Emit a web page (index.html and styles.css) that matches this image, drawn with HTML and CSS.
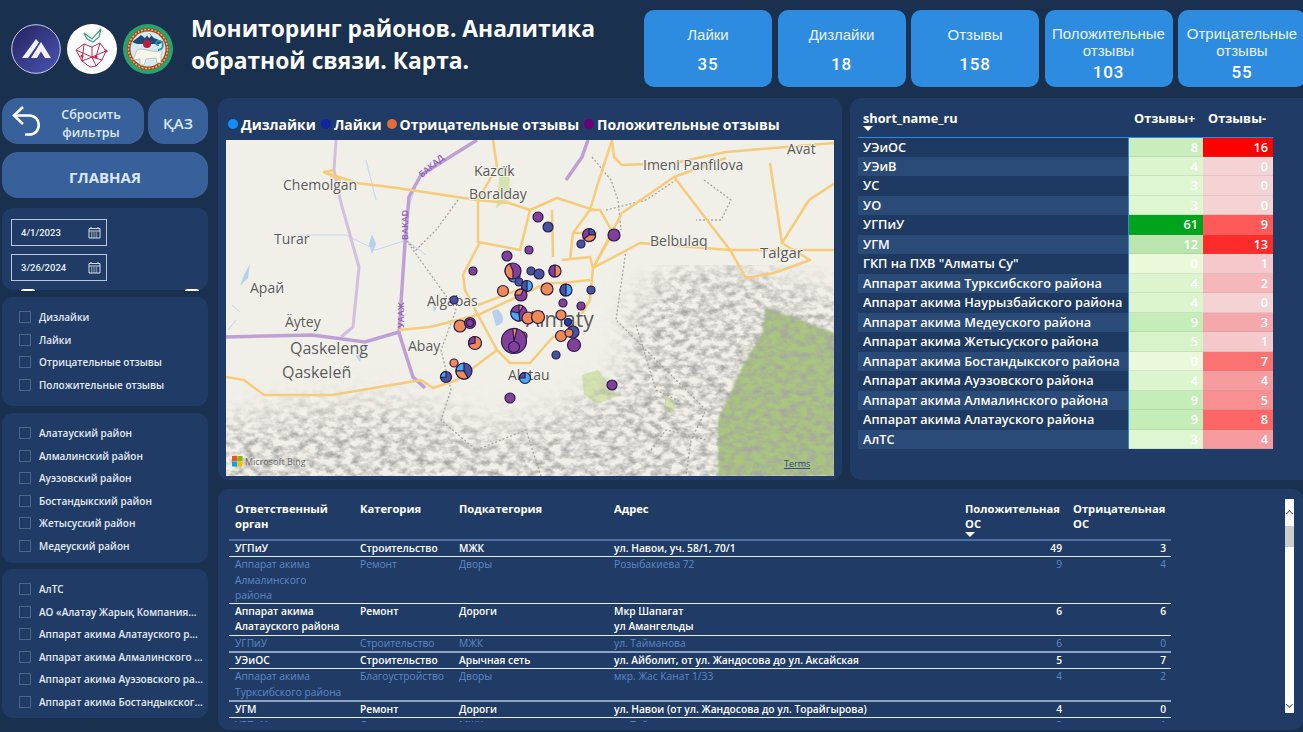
FILE: index.html
```html
<!DOCTYPE html>
<html lang="ru">
<head>
    <meta charset="UTF-8">
    <meta name="viewport" content="width=device-width, initial-scale=1.0">
    <title>Мониторинг районов</title>
    <link rel="stylesheet" href="styles.css">
</head>
<body>
    <header class="top">
        <div class="logos">
            <svg class="logo" viewBox="0 0 50 50">
                <defs>
                    <linearGradient id="logoBlue" x1="0" y1="0" x2="1" y2="1">
                        <stop offset="0" stop-color="#26215f"/>
                        <stop offset="1" stop-color="#4a56b4"/>
                    </linearGradient>
                </defs>
                <circle cx="25" cy="25" r="24.3" fill="url(#logoBlue)" stroke="#c9cdea" stroke-width="1"/>
                <path d="M11 34 L25 15 L28 18.5 L17 34Z M20 34 L30 18 L40 34 H34 L30 27.5 L26 34Z" fill="#f2f2fb"/>
            </svg>
            <svg class="logo" viewBox="0 0 50 50">
                <circle cx="25" cy="25" r="25" fill="#fff"/>
                <path d="M17 9 L25 15 L34 5 L32 13 L26 18 L20 15Z" fill="none" stroke="#3a9d82" stroke-width="1.2"/>
                <path d="M9 26 L17 20 L25 23 L33 19 L39 27 L35 36 L29 42 L23 43 L15 37Z M17 20 L15 37 L25 33 L29 42 M25 23 L25 33 L35 36 M33 19 L29 33 M9 26 L25 33 L39 27" fill="none" stroke="#c8254b" stroke-width="1"/>
                <circle cx="39" cy="27" r="1.6" fill="#c8254b"/>
                <circle cx="29" cy="33" r="1.6" fill="#c8254b"/>
                <circle cx="15" cy="32" r="1.6" fill="#c8254b"/>
            </svg>
            <svg class="logo" viewBox="0 0 50 50">
                <circle cx="25" cy="25" r="25" fill="#27a36e"/>
                <circle cx="25" cy="25" r="21" fill="#a8472c"/>
                <circle cx="25" cy="25" r="19.500" fill="none" stroke="#e6c15a" stroke-width="1.500" stroke-dasharray="2 1.500"/>
                <circle cx="25" cy="25" r="17.500" fill="#d6e9ee"/>
                <path d="M9 18 L18 11 L22 14 L26 9 L31 14 L41 18 L36 20 H14Z" fill="#1f4a78"/>
                <path d="M24 11 L26 9 L28 12 L26 14Z" fill="#fff"/>
                <circle cx="24" cy="20" r="4" fill="#b5213a"/>
                <path d="M10 36 L14 26 C20 23 30 29 35 27 C38 25 40 27 38 31 L38 39 L34 39 L33 34 L23 35 L21 41 L17 41 L17 35Z" fill="#f7f5ea" stroke="#8a9a9a" stroke-width=".5"/>
                <path d="M35 26 C42 25 41 16 35 17 C32 18 33 22 36 21" fill="none" stroke="#2b95a8" stroke-width="1.800"/>
            </svg>
        </div>
        <h1 class="title">Мониторинг районов. Аналитика обратной связи. Карта.</h1>
        <div class="kpis">
            <div class="kpi"><span class="kpi-name">Лайки</span><span class="kpi-num">35</span></div>
            <div class="kpi"><span class="kpi-name">Дизлайки</span><span class="kpi-num">18</span></div>
            <div class="kpi"><span class="kpi-name">Отзывы</span><span class="kpi-num">158</span></div>
            <div class="kpi kpi-long"><span class="kpi-name">Положительные отзывы</span><span class="kpi-num">103</span></div>
            <div class="kpi kpi-long"><span class="kpi-name">Отрицательные отзывы</span><span class="kpi-num">55</span></div>
        </div>
    </header>

    <div class="main">
        <aside class="side">
            <div class="btn-row">
                <button class="btn btn-reset">
                    <svg class="reset-icon" viewBox="0 0 28 32">
                        <path d="M11 2 L2 10.500 L11 19 M2 10.500 H17 C30 10.500 30 29.500 17 29.500 H13" fill="none" stroke="#fff" stroke-width="2.600"/>
                    </svg>
                    <span class="reset-text">Сбросить фильтры</span>
                </button>
                <button class="btn btn-lang">ҚАЗ</button>
            </div>
            <button class="btn btn-main">ГЛАВНАЯ</button>

            <div class="panel dates">
                <div class="date-box"><span>4/1/2023</span>
                    <svg class="cal" viewBox="0 0 13 13"><path d="M1 2.500h11v9.500h-11z M1 5h11" fill="none" stroke="#d5dcea"/><path d="M3 1v2M10 1v2M3 7h7M3 9h7M3 11h7" stroke="#d5dcea" stroke-dasharray="1 .7"/></svg>
                </div>
                <div class="date-box"><span>3/26/2024</span>
                    <svg class="cal" viewBox="0 0 13 13"><path d="M1 2.500h11v9.500h-11z M1 5h11" fill="none" stroke="#d5dcea"/><path d="M3 1v2M10 1v2M3 7h7M3 9h7M3 11h7" stroke="#d5dcea" stroke-dasharray="1 .7"/></svg>
                </div>
                <span class="handle handle-left"></span>
                <span class="handle handle-right"></span>
            </div>

            <ul class="panel checks checks-type">
                <li><i></i><span>Дизлайки</span></li>
                <li><i></i><span>Лайки</span></li>
                <li><i></i><span>Отрицательные отзывы</span></li>
                <li><i></i><span>Положительные отзывы</span></li>
            </ul>
            <ul class="panel checks checks-list">
                <li><i></i><span>Алатауский район</span></li>
                <li><i></i><span>Алмалинский район</span></li>
                <li><i></i><span>Ауэзовский район</span></li>
                <li><i></i><span>Бостандыкский район</span></li>
                <li><i></i><span>Жетысуский район</span></li>
                <li><i></i><span>Медеуский район</span></li>
            </ul>
            <ul class="panel checks checks-list">
                <li><i></i><span>АлТС</span></li>
                <li><i></i><span>АО «Алатау Жарық Компания...</span></li>
                <li><i></i><span>Аппарат акима Алатауского р...</span></li>
                <li><i></i><span>Аппарат акима Алмалинского ...</span></li>
                <li><i></i><span>Аппарат акима Ауэзовского ра...</span></li>
                <li><i></i><span>Аппарат акима Бостандыкског...</span></li>
            </ul>
        </aside>

        <div class="content">
            <section class="panel map-panel">
                <div class="legend">
                    <span class="dot dot-sky"></span><span>Дизлайки</span>
                    <span class="dot dot-navy"></span><span>Лайки</span>
                    <span class="dot dot-orange"></span><span>Отрицательные отзывы</span>
                    <span class="dot dot-purple"></span><span>Положительные отзывы</span>
                </div>
                <svg class="map" viewBox="0 0 608 336">
                    <defs>
                        <filter id="relief" x="0" y="0" width="1" height="1">
                            <feTurbulence type="fractalNoise" baseFrequency=".11 .16" numOctaves="4" seed="7" result="noise"/>
                            <feColorMatrix in="noise" values="0 0 0 0 .38  0 0 0 0 .38  0 0 0 0 .36  2.200 0 0 0 -.8" result="grain"/>
                            <feGaussianBlur in="SourceAlpha" stdDeviation="16" result="edge"/>
                            <feComposite in="grain" in2="edge" operator="in"/>
                        </filter>
                        <filter id="soft"><feGaussianBlur stdDeviation="1"/></filter>
                    </defs>
                    <rect width="608" height="336" fill="#f0efe8"/>
                    <path d="M492 336V280L516 227L536 193L540 167L609 193V336Z" fill="#a9c57f" filter="url(#soft)"/>
                    <path class="green" d="M274 30L284 30L283 60L270 68Z"/>
                    <path class="green" d="M356 235L372 230L392 256L372 264L358 254Z"/>
                    <path class="green" d="M440 255L450 262L446 275L438 268Z"/>
                    <path d="M-40 290L60 270L160 262L215 275L270 290L340 270L400 235L405 170L440 130L520 125L650 170V380H-40Z" filter="url(#relief)"/>
                    <path class="lake" d="M266 172Q272 166 276 175T270 186Z M146 94L150 104L146 114L143 104Z M18 135L24 124L22 138L14 146Z M132 208L137 212L134 222L130 216Z M206 160L212 166L208 172Z"/>
                    <path class="water" d="M70 95H120L150 110L180 100L200 115M190 45L182 70M140 20L150 60M6 165L14 172M10 180L2 190"/>

                    <path class="border" d="M232 60L210 90L190 110L180 100L230 170L215 210L225 250L215 280L250 310L300 290L315 336M366 17L385 40L392 60L395 90M380 70L420 60L450 40M478 40L505 60L495 80L470 80M400 110L390 180L440 230L480 270L465 300L460 336M410 185L430 250L455 262M425 310L440 290L480 300"/>

                    <path class="lilac" d="M110 0L108 30L115 63L133 127L127 187L115 197"/>
                    <path class="purple" d="M251 0L195 35L183 57L179 103L173 193L187 237L199 248"/>
                    <path class="purple" d="M0 197L86 195L139 202L173 192"/>
                    <path class="purple" d="M362 0L356 17L340 40"/>

                    <g class="road">
                        <path d="M98 32L131 43L171 48L251 60L283 63L304 70L331 58L368 70"/>
                        <path d="M108 30L98 32L115 40"/>
                        <path d="M267 0L271 27L252 60V102L294 110L304 70M326 70L327 117"/>
                        <path d="M254 102L237 135L239 150L252 175L271 210L284 223H304L327 197L344 193L364 160L367 128L414 103L504 110H609"/>
                        <path d="M204 187L252 175L321 143H337L364 140"/>
                        <path d="M386 0L372 43L364 70L347 93L344 120M347 93H371M364 70H374L387 93L367 128M336 120L364 117L367 128"/>
                        <path d="M386 0L388 17L396 25L448 23L500 12L609 3"/>
                        <path d="M448 37L504 110M448 37L396 73L367 128M448 37L500 18M609 43L583 60L556 103L544 23"/>
                        <path d="M504 110L520 138L548 133L584 120L556 103"/>
                        <path d="M0 237L18 240L38 255L106 255L195 240L207 248L231 240L271 210"/>
                        <path d="M173 190L204 187"/>
                        <path d="M252 165L300 147"/>
                    </g>

                    <text class="label" x="57" y="50">Chemolgan</text>
                    <text class="label" x="248" y="36">Kazcïk</text>
                    <text class="label" x="243" y="59">Boralday</text>
                    <text class="label" x="417" y="30">Imeni Panfilova</text>
                    <text class="label" x="561" y="14">Avat</text>
                    <text class="label" x="48" y="104">Turar</text>
                    <text class="label" x="424" y="106">Belbulaq</text>
                    <text class="label label-md" x="534" y="118">Talgar</text>
                    <text class="label" x="24" y="153">Арай</text>
                    <text class="label" x="201" y="166">Algabas</text>
                    <text class="label" x="59" y="187">Äytey</text>
                    <text class="label" x="182" y="211">Abay</text>
                    <text class="label label-lg" x="64" y="214">Qaskeleng</text>
                    <text class="label label-lg" x="56" y="238">Qaskeleñ</text>
                    <text class="label label-xl" x="300" y="187">Almaty</text>
                    <text class="label" x="282" y="240">Alatau</text>
                    <text class="road-label" transform="translate(196 38) rotate(-40)">БАКАД</text>
                    <text class="road-label" transform="translate(182 100) rotate(-90)">BAKAD</text>
                    <text class="road-label" transform="translate(178 188) rotate(-90)">УААЖ</text>

                    <circle class="b-purple" cx="312" cy="77" r="5"/>
                    <circle class="b-navy" cx="322" cy="87" r="5"/>
                    <g class="pie" transform="translate(363 95) scale(6.500)">
                        <circle class="b-purple" r="1"/><path class="b-navy" d="M0 0V-1A1 1 0 0 1 1 0Z"/><path class="b-orange" d="M0 0L1 0A1 1 0 0 1 -.8 .6Z"/>
                    </g>
                    <circle class="b-purple" cx="388" cy="95" r="6"/>
                    <circle class="b-navy" cx="355" cy="104" r="4"/>
                    <circle class="b-purple" cx="303" cy="110" r="4"/>
                    <circle class="b-purple" cx="281" cy="116" r="5"/>
                    <circle class="b-purple" cx="247" cy="131" r="4"/>
                    <circle class="b-sky" cx="288" cy="136" r="6"/>
                    <g class="pie" transform="translate(287 131) scale(8)">
                        <circle class="b-purple" r="1"/><path class="b-orange" d="M0 0V1A1 1 0 0 1 -1 0A1 1 0 0 1 -.4 -.9Z"/>
                    </g>
                    <circle class="b-navy" cx="305" cy="131" r="4"/>
                    <circle class="b-navy" cx="313" cy="134" r="5"/>
                    <g class="pie" transform="translate(329 131) scale(6)">
                        <circle class="b-orange" r="1"/><path class="b-purple" d="M0 -1A1 1 0 0 0 0 1Z"/>
                    </g>
                    <circle class="b-navy" cx="293" cy="142" r="4"/>
                    <g class="pie" transform="translate(301 146) scale(5.500)">
                        <circle class="b-sky" r="1"/><path class="b-navy" d="M0 0V-1A1 1 0 0 0 -1 0A1 1 0 0 0 0 1Z"/>
                    </g>
                    <circle class="b-orange" cx="277" cy="151" r="5.500"/>
                    <circle class="b-orange" cx="321" cy="149" r="6"/>
                    <g class="pie" transform="translate(340 150) scale(6)">
                        <circle class="b-sky" r="1"/><path class="b-navy" d="M0 -1A1 1 0 0 0 0 1Z"/>
                    </g>
                    <circle class="b-navy" cx="365" cy="150" r="4"/>
                    <g class="pie" transform="translate(295 155) scale(6)">
                        <circle class="b-purple" r="1"/><path class="b-orange" d="M0 0L-1 0A1 1 0 0 1 .4 -.9Z"/>
                    </g>
                    <circle class="b-navy" cx="228" cy="160" r="4"/>
                    <circle class="b-purple" cx="337" cy="163" r="4"/>
                    <circle class="b-purple" cx="355" cy="166" r="4"/>
                    <g class="pie" transform="translate(293 173) scale(8)">
                        <circle class="b-purple" r="1"/><path class="b-sky" d="M0 0L.1 1A1 1 0 0 1 -1 -.2Z"/><path class="b-orange" d="M0 0V-1A1 1 0 0 1 .5 -.85Z"/>
                    </g>
                    <circle class="b-orange" cx="302" cy="178" r="6"/>
                    <circle class="b-orange" cx="312" cy="177" r="6.500"/>
                    <circle class="b-orange" cx="335" cy="175" r="5"/>
                    <circle class="b-navy" cx="347" cy="192" r="6"/>
                    <circle class="b-blue" cx="342" cy="182" r="3.500"/>
                    <circle class="b-orange" cx="335" cy="196" r="5.500"/>
                    <circle class="b-orange" cx="343" cy="193" r="4"/>
                    <circle class="b-purple" cx="348" cy="205" r="6.500"/>
                    <circle class="b-orange" cx="234" cy="186" r="6"/>
                    <circle class="b-purple" cx="244" cy="183" r="5.500"/>
                    <circle class="b-purple" cx="244" cy="183" r="3.500"/>
                    <g class="pie" transform="translate(249 203) scale(6.500)">
                        <circle class="b-orange" r="1"/><path class="b-purple" d="M0 0V-1A1 1 0 0 0 -1 .2Z"/>
                    </g>
                    <circle class="b-orange" cx="297" cy="196" r="4"/>
                    <g class="pie" transform="translate(288 201) scale(12.500)">
                        <circle class="b-purple" r="1"/><path class="b-orange" d="M0 0L-.1 -1A1 1 0 0 1 .25 -.97Z"/>
                    </g>
                    <circle class="b-purple" cx="288" cy="207" r="5.500"/>
                    <circle class="b-navy" cx="330" cy="215" r="4"/>
                    <circle class="b-orange" cx="228" cy="223" r="4"/>
                    <g class="pie" transform="translate(238 231) scale(8)">
                        <circle class="b-navy" r="1"/><path class="b-sky" d="M0 0V-1A1 1 0 0 0 -1 0Z"/><path class="b-orange" d="M0 0L-1 0A1 1 0 0 0 .5 .87Z"/>
                    </g>
                    <g class="pie" transform="translate(220 237) scale(5.500)">
                        <circle class="b-navy" r="1"/><path class="b-sky" d="M0 0V-1A1 1 0 0 0 -1 .1Z"/>
                    </g>
                    <g class="pie" transform="translate(299 238) scale(5.500)">
                        <circle class="b-sky" r="1"/><path class="b-navy" d="M0 0V-1A1 1 0 0 0 -1 0Z"/>
                    </g>
                    <circle class="b-purple" cx="386" cy="245" r="5"/>
                    <circle class="b-purple" cx="284" cy="258" r="5"/>

                    <rect x="6" y="316" width="5" height="5" fill="#f25022"/>
                    <rect x="11.500" y="316" width="5" height="5" fill="#7fba00"/>
                    <rect x="6" y="321.500" width="5" height="5" fill="#00a4ef"/>
                    <rect x="11.500" y="321.500" width="5" height="5" fill="#ffb900"/>
                    <text class="bing" x="19" y="325">Microsoft Bing</text>
                    <text class="terms" x="558" y="327">Terms</text>
                </svg>
            </section>

            <section class="panel rank-panel">
                <table class="rank">
                    <thead>
                        <tr><th class="rank-name">short_name_ru<b class="sort"></b></th><th class="rank-num">Отзывы+</th><th class="rank-num">Отзывы-</th></tr>
                    </thead>
                    <tbody>
                        <tr><td>УЭиОС</td><td class="p8">8</td><td class="n16">16</td></tr>
                        <tr><td>УЭиВ</td><td class="p4">4</td><td class="n0">0</td></tr>
                        <tr><td>УС</td><td class="p3">3</td><td class="n0">0</td></tr>
                        <tr><td>УО</td><td class="p3">3</td><td class="n0">0</td></tr>
                        <tr><td>УГПиУ</td><td class="p61">61</td><td class="n9">9</td></tr>
                        <tr><td>УГМ</td><td class="p12">12</td><td class="n13">13</td></tr>
                        <tr><td>ГКП на ПХВ "Алматы Су"</td><td class="p0">0</td><td class="n1">1</td></tr>
                        <tr><td>Аппарат акима Турксибского района</td><td class="p4">4</td><td class="n2">2</td></tr>
                        <tr><td>Аппарат акима Наурызбайского района</td><td class="p4">4</td><td class="n0">0</td></tr>
                        <tr><td>Аппарат акима Медеуского района</td><td class="p9">9</td><td class="n3">3</td></tr>
                        <tr><td>Аппарат акима Жетысуского района</td><td class="p5">5</td><td class="n1">1</td></tr>
                        <tr><td>Аппарат акима Бостандыкского района</td><td class="p0">0</td><td class="n7">7</td></tr>
                        <tr><td>Аппарат акима Ауэзовского района</td><td class="p4">4</td><td class="n4">4</td></tr>
                        <tr><td>Аппарат акима Алмалинского района</td><td class="p9">9</td><td class="n5">5</td></tr>
                        <tr><td>Аппарат акима Алатауского района</td><td class="p9">9</td><td class="n8">8</td></tr>
                        <tr><td>АлТС</td><td class="p3">3</td><td class="n4">4</td></tr>
                    </tbody>
                </table>
            </section>

            <section class="panel detail-panel">
                <div class="detail-wrap">
                    <table class="detail">
                        <colgroup>
                            <col class="c-org"><col class="c-cat"><col class="c-sub"><col class="c-addr"><col class="c-pos"><col class="c-neg">
                        </colgroup>
                        <thead>
                            <tr>
                                <th>Ответственный орган</th><th>Категория</th><th>Подкатегория</th><th>Адрес</th>
                                <th>Положительная ОС<b class="sort"></b></th><th>Отрицательная ОС</th>
                            </tr>
                        </thead>
                        <tbody>
                            <tr><td>УГПиУ</td><td>Строительство</td><td>МЖК</td><td>ул. Навои, уч. 58/1, 70/1</td><td class="num">49</td><td class="num">3</td></tr>
                            <tr class="dim"><td>Аппарат акима<br>Алмалинского<br>района</td><td>Ремонт</td><td>Дворы</td><td>Розыбакиева 72</td><td class="num">9</td><td class="num">4</td></tr>
                            <tr><td>Аппарат акима Алатауского района</td><td>Ремонт</td><td>Дороги</td><td>Мкр Шапагат<br>ул Амангельды</td><td class="num">6</td><td class="num">6</td></tr>
                            <tr class="dim thick"><td>УГПиУ</td><td>Строительство</td><td>МЖК</td><td>ул. Тайманова</td><td class="num">6</td><td class="num">0</td></tr>
                            <tr><td>УЭиОС</td><td>Строительство</td><td>Арычная сеть</td><td>ул. Айболит, от ул. Жандосова до ул. Аксайская</td><td class="num">5</td><td class="num">7</td></tr>
                            <tr class="dim thick"><td>Аппарат акима Турксибского района</td><td>Благоустройство</td><td>Дворы</td><td>мкр. Жас Канат 1/33</td><td class="num">4</td><td class="num">2</td></tr>
                            <tr><td>УГМ</td><td>Ремонт</td><td>Дороги</td><td>ул. Навои (от ул. Жандосова до ул. Торайгырова)</td><td class="num">4</td><td class="num">0</td></tr>
                            <tr class="dim"><td>УГПиУ</td><td>Строительство</td><td>МЖК</td><td>ул. Тайманова</td><td class="num">3</td><td class="num">1</td></tr>
                        </tbody>
                    </table>
                </div>
                <div class="scrollbar"><span class="scroll-up"></span><span class="scroll-thumb"></span><span class="scroll-down"></span></div>
            </section>
        </div>
    </div>
</body>
</html>
```

FILE: styles.css
```css
* {
    box-sizing: border-box;
}

body {
    margin: 0;
    width: 1303px;
    height: 732px;
    overflow: hidden;
    background-color: #19304f;
    font-family: "Open Sans", "Noto Sans", sans-serif;
    color: #fff;
}

.top {
    display: flex;
    height: 98px;
    padding-left: 11px;
}

.logos {
    display: flex;
    flex: none;
    gap: 6px;
    padding-top: 24px;
}

.logo {
    width: 50px;
    height: 50px;
}

.title {
    flex: none;
    width: 440px;
    margin: 13px 0 0 18px;
    font-size: 22.800px;
    line-height: 32px;
    font-weight: 700;
}

.kpis {
    display: flex;
    flex: none;
    gap: 5.500px;
    margin-left: 13px;
    padding-top: 10px;
}

.kpi {
    display: flex;
    flex: none;
    flex-direction: column;
    align-items: center;
    gap: 11px;
    width: 128px;
    height: 77px;
    padding-top: 16px;
    background-color: #2e8ce0;
    border-radius: 10px;
    text-align: center;
}

.kpi-name {
    font-family: "Liberation Sans", sans-serif;
    font-size: 15px;
    line-height: 17px;
    color: #e9f3fc;
}

.kpi-num {
    font-family: Roboto, sans-serif;
    font-size: 17px;
    line-height: 20px;
    font-weight: 500;
    letter-spacing: .8px;
}

.kpi-long {
    gap: 3px;
    padding-top: 15px;
}

.main {
    display: flex;
    gap: 10px;
    padding-left: 2px;
}

.side {
    display: flex;
    flex-direction: column;
    width: 206px;
}

.btn {
    border: none;
    border-radius: 16px;
    background-color: #38619c;
    color: #dbe8f6;
    font-family: inherit;
    font-weight: 600;
    padding: 3px 0 0;
}

.btn-row {
    display: flex;
    gap: 4px;
}

.btn-reset {
    display: flex;
    align-items: center;
    width: 142px;
    height: 46px;
    padding: 0 0 0 10px;
    font-size: 12.500px;
    line-height: 18px;
}

.reset-icon {
    width: 28px;
    height: 32px;
}

.reset-text {
    width: 80px;
    margin: 6px 0 0 11px;
}

.btn-lang {
    width: 60px;
    height: 46px;
    font-size: 15px;
}

.btn-main {
    height: 46px;
    margin-top: 8px;
    font-size: 15px;
    font-weight: 700;
}

.panel {
    background-color: #203c66;
    border-radius: 11px;
}

.dates {
    position: relative;
    height: 82px;
    margin-top: 10px;
    padding: 11px 0 0 9px;
}

.date-box {
    display: flex;
    align-items: center;
    justify-content: space-between;
    width: 96px;
    height: 27px;
    margin-bottom: 8px;
    padding: 0 5px 0 9px;
    border: 1px solid #b9c6da;
    font-family: Roboto, sans-serif;
    font-size: 9.500px;
    font-weight: 500;
    color: #e6edf6;
}

.cal {
    width: 13px;
    height: 13px;
}

.handle {
    position: absolute;
    bottom: -1px;
    width: 14px;
    height: 2px;
    background-color: #fff;
    border-radius: 7px 7px 0 0;
}

.handle-left {
    left: 19px;
}

.handle-right {
    right: 9px;
}

.checks {
    list-style: none;
    margin: 7px 0 0;
    padding: 9px 0 0 17px;
    font-size: 10px;
    font-weight: 600;
    color: #e3eaf4;
}

.checks-type {
    height: 109px;
}

.checks-list {
    height: 150px;
}

.checks-list + .checks-list {
    height: 149px;
    margin-top: 6px;
}

.checks li {
    display: flex;
    align-items: center;
    gap: 8px;
    height: 22.500px;
}

.checks i {
    flex: none;
    width: 12px;
    height: 12px;
    border: 1px solid #4d6687;
}

.checks span {
    white-space: nowrap;
}

.content {
    display: grid;
    grid-template-columns: 624px 453px;
    grid-template-rows: 382px 241px;
    column-gap: 8px;
    row-gap: 9px;
}

.map-panel {
    padding: 0 8px;
}

.legend {
    display: flex;
    align-items: center;
    height: 42px;
    padding: 10px 0 0 2px;
    font-size: 14px;
    font-weight: 700;
    white-space: nowrap;
}

.legend span:nth-child(even) {
    margin: 0 5px 0 3px;
}

.dot {
    width: 10px;
    height: 10px;
    border-radius: 50%;
}

.dot-sky {
    background-color: #118dff;
}

.dot-navy {
    background-color: #12239e;
}

.dot-orange {
    background-color: #e66c37;
}

.dot-purple {
    background-color: #6b007b;
}

.map {
    display: block;
    width: 608px;
    height: 336px;
}

.green {
    fill: #d5e3b0;
}

.lake {
    fill: #b7d0ec;
}

.water {
    fill: none;
    stroke: #c4d6ee;
    stroke-width: 1;
}

.border {
    fill: none;
    stroke: #a5a5a0;
    stroke-width: 1.300;
    stroke-dasharray: 2 2;
}

.lilac {
    fill: none;
    stroke: #d3bfe0;
    stroke-width: 3;
}

.purple {
    fill: none;
    stroke: #bfa0d6;
    stroke-width: 3.500;
}

.road path {
    fill: none;
    stroke: #f6cb7a;
    stroke-width: 2.500;
    stroke-linejoin: round;
}

.label {
    font-size: 14px;
    fill: #5a5a58;
    stroke: #f4f3ee;
    stroke-width: 2px;
    paint-order: stroke;
}

.label-md {
    font-size: 15px;
}

.label-lg {
    font-size: 16px;
}

.label-xl {
    font-size: 21px;
}

.road-label {
    font-size: 9px;
    font-weight: 600;
    fill: #8f5fb5;
}

.map circle,
.map .pie path {
    stroke: #2a1a4a;
    stroke-width: 1.200px;
    vector-effect: non-scaling-stroke;
}

.b-purple {
    fill: #83409a;
}

.b-navy {
    fill: #46549f;
}

.b-blue {
    fill: #1c3fb0;
}

.b-orange {
    fill: #ee8a55;
}

.b-sky {
    fill: #46a8f8;
}

.bing {
    font-size: 9px;
    fill: #666;
}

.terms {
    font-size: 9px;
    fill: #2a4a80;
    text-decoration: underline;
}

.rank-panel {
    padding: 0 8px;
    border-radius: 11px 0 0 11px;
}

.rank {
    width: 415px;
    table-layout: fixed;
    border-collapse: collapse;
    font-size: 12.750px;
    font-weight: 600;
}

.rank th {
    height: 39px;
    padding: 12px 5px 0;
    text-align: left;
    vertical-align: top;
    font-size: 12.750px;
    line-height: 16px;
    font-weight: 700;
    white-space: nowrap;
    border-bottom: 1px solid #2e8ce0;
}

.rank th:nth-child(1) {
    width: 271px;
}

.rank th:nth-child(2) {
    width: 74px;
}

.rank th:nth-child(3) {
    width: 70px;
}

.sort {
    display: block;
    width: 0;
    border-left: 5px solid transparent;
    border-right: 5px solid transparent;
    border-top: 5px solid #fff;
}

.rank td {
    height: 19.500px;
    padding: 0 5px;
    white-space: nowrap;
    text-align: right;
    line-height: 15px;
    box-shadow: inset 0 -1px 0 rgba(120, 140, 120, 0.18);
}

.rank td:first-child {
    text-align: left;
    background-color: #1e3a63;
    box-shadow: inset -1px 0 0 #2e8ce0;
}

.rank tr:nth-child(even) td:first-child {
    background-color: #2a4a78;
}

.p0 { background-color: #ecf8da; }
.p3 { background-color: #dff6d3; }
.p4 { background-color: #dcf5cf; }
.p5 { background-color: #d8f2c9; }
.p8 { background-color: #c9edbc; }
.p9 { background-color: #c5edb8; }
.p12 { background-color: #bbe5ae; }
.p61 { background-color: #00a31c; }
.n0 { background-color: #f5d3d5; }
.n1 { background-color: #f5c8cb; }
.n2 { background-color: #f6b7ba; }
.n3 { background-color: #f4a8ac; }
.n4 { background-color: #f69b9e; }
.n5 { background-color: #f98f90; }
.n7 { background-color: #fb7272; }
.n8 { background-color: #fd6666; }
.n9 { background-color: #ff5a5a; }
.n13 { background-color: #ff2b2b; }
.n16 { background-color: #ff0000; }

.detail-panel {
    position: relative;
    grid-column: 1 / 3;
    padding: 11px 0 0 11px;
}

.detail-wrap {
    height: 222px;
    overflow: hidden;
}

.detail {
    width: 942px;
    table-layout: fixed;
    border-collapse: collapse;
    font-size: 10.250px;
    line-height: 15.300px;
}

.c-org { width: 125px; }
.c-cat { width: 99px; }
.c-sub { width: 155px; }
.c-addr { width: 351px; }
.c-pos { width: 108px; }
.c-neg { width: 104px; }

.detail th {
    height: 40px;
    padding: 1px 6px 0;
    text-align: left;
    vertical-align: top;
    font-size: 11.200px;
    font-weight: 700;
    border-bottom: 2px solid #4b6ea3;
}

.detail td {
    padding: 0 6px;
    vertical-align: top;
    font-weight: 600;
    border-bottom: 1px solid #e6edf6;
}

.detail .num {
    text-align: right;
    padding-right: 5px;
}

.detail .dim td {
    color: #5f87c4;
    font-weight: 500;
}

.detail .thick td {
    border-bottom: 2px solid #8fa3c2;
}

.scrollbar {
    position: absolute;
    top: 10px;
    left: 1067px;
    display: flex;
    flex-direction: column;
    width: 9px;
    height: 214px;
    background-color: #fff;
}

.scroll-up,
.scroll-down {
    width: 5px;
    height: 5px;
    margin: 12px 0 0 2px;
    border-left: 1px solid #666;
    border-top: 1px solid #666;
    transform: rotate(45deg);
}

.scroll-thumb {
    height: 21px;
    margin-top: 10px;
    background-color: #cdcdcd;
}

.scroll-down {
    margin: auto 0 6px 2px;
    transform: rotate(225deg);
}
```
